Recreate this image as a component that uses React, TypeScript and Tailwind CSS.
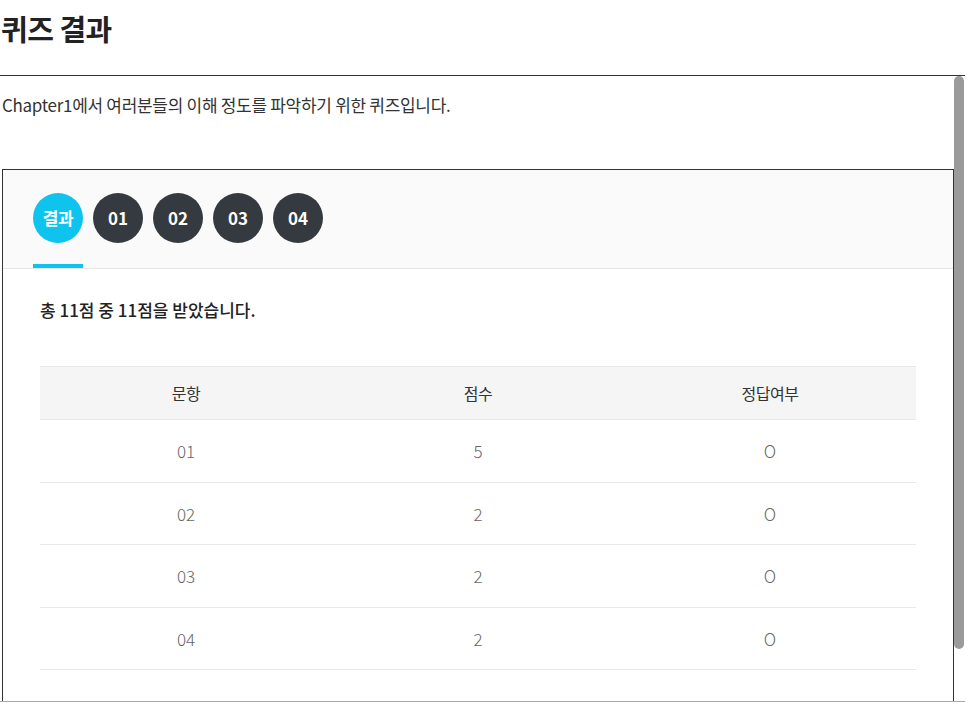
const tabs = ["결과", "01", "02", "03", "04"];

const rows = [
  { no: "01", score: "5", ok: "O" },
  { no: "02", score: "2", ok: "O" },
  { no: "03", score: "2", ok: "O" },
  { no: "04", score: "2", ok: "O" },
];

export default function App() {
  return (
    <div className="w-[965px] bg-white font-['Noto_Sans_CJK_KR','Noto_Sans',sans-serif] text-[#333]">
      <div className="flex h-[76px] items-start border-b border-[#333]">
        <h1 className="mt-[8px] pl-[1px] text-[29px] font-bold leading-[40px] tracking-[-0.5px] text-[#222]">퀴즈 결과</h1>
      </div>

      <div className="flex h-[626px] border-b border-[#aaa]">
        <div className="flex-1 overflow-hidden">
          <p className="pt-[17px] pl-[2px] text-[17px] leading-[24px] tracking-[-0.3px] text-[#333]">
            Chapter1에서 여러분들의 이해 정도를 파악하기 위한 퀴즈입니다.
          </p>

          <div className="mt-[52px] ml-[2px] border border-[#333] pb-[90px]">
            <div className="flex h-[99px] items-end gap-[10px] border-b border-[#e6e6e6] bg-[#fafafa] pl-[30px]">
              {tabs.map((t, i) => (
                <div key={t} className="flex flex-col items-center">
                  <button
                    type="button"
                    className={
                      i === 0
                        ? "flex h-[50px] w-[50px] items-center justify-center rounded-full bg-[#0ec4ee] text-[17px] font-bold tracking-[-0.5px] text-white"
                        : "flex h-[50px] w-[50px] items-center justify-center rounded-full bg-[#343a40] text-[17px] font-bold text-white"
                    }
                  >
                    {t}
                  </button>
                  <div className={i === 0 ? "mt-[21px] h-[4px] w-[50px] bg-[#0ec4ee]" : "mt-[21px] h-[4px] w-[50px]"} />
                </div>
              ))}
            </div>

            <div className="px-[37px]">
              <p className="mt-[29px] text-[17px] font-medium leading-[24px] text-[#222]">
                총 11점 중 11점을 받았습니다.
              </p>

              <table className="mt-[44px] w-full table-fixed border-collapse text-center">
                <thead>
                  <tr className="h-[53px] border-y border-[#e8e8e8] bg-[#f5f5f5] text-[16px] tracking-[-0.5px] text-[#333]">
                    <th className="font-normal">문항</th>
                    <th className="font-normal">점수</th>
                    <th className="font-normal">정답여부</th>
                  </tr>
                </thead>
                <tbody>
                  {rows.map((r) => (
                    <tr key={r.no} className="h-[62.5px] border-b border-[#e8e8e8] text-[17px] font-light text-[#666]">
                      <td>{r.no}</td>
                      <td>{r.score}</td>
                      <td>{r.ok}</td>
                    </tr>
                  ))}
                </tbody>
              </table>
            </div>
          </div>
        </div>

        <div className="w-[11px] shrink-0">
          <div className="h-[573px] w-[10px] rounded-full bg-[#9b9b9b]" />
        </div>
      </div>
    </div>
  );
}
